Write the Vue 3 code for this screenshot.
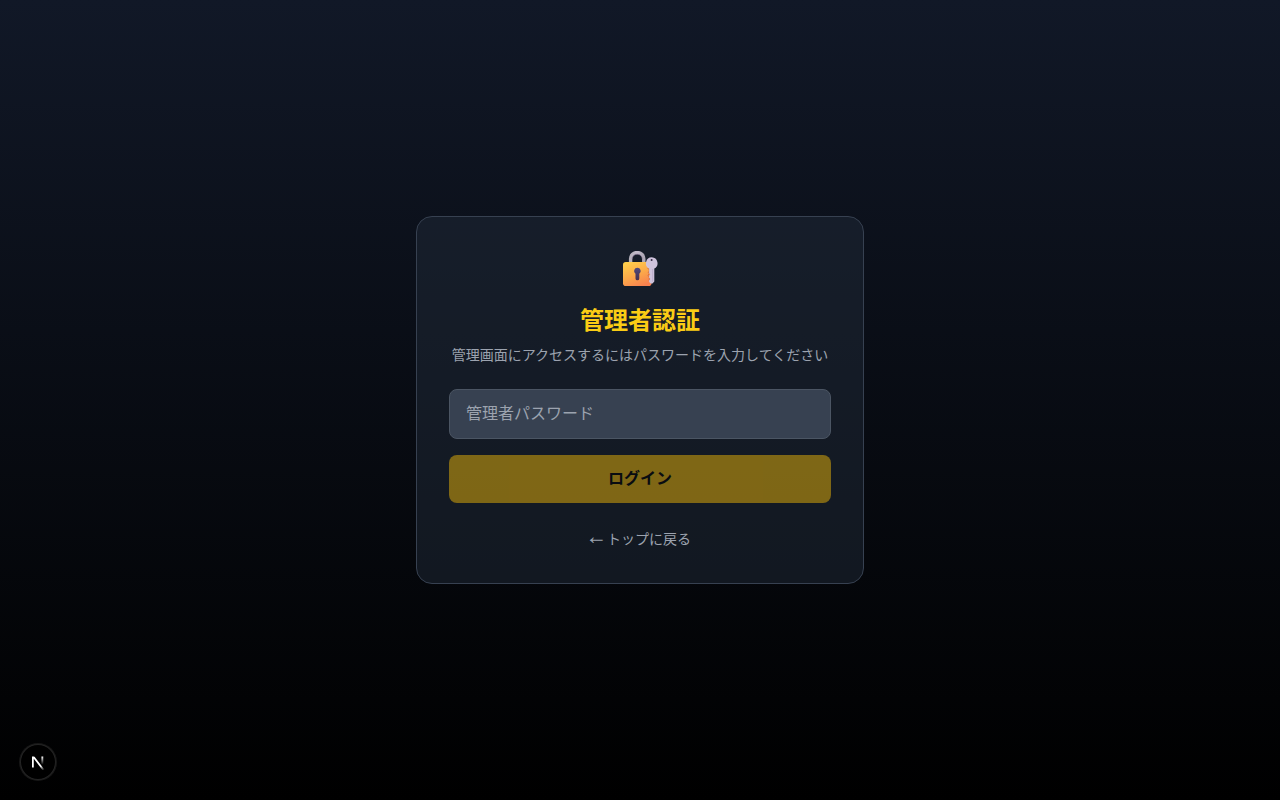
<template>
  <main class="login-page">
    <section class="login-card">
      <header class="login-header">
        <svg class="lock-icon" viewBox="0 0 36 36" role="img" aria-label="lock">
          <defs>
            <linearGradient id="lockBody" x1="0.2" y1="0" x2="0.7" y2="1">
              <stop offset="0" stop-color="#ffce4b" />
              <stop offset="0.5" stop-color="#fcab49" />
              <stop offset="1" stop-color="#f8804f" />
            </linearGradient>
            <linearGradient id="lockShackle" x1="0" y1="0" x2="1" y2="0">
              <stop offset="0" stop-color="#b4b0ba" />
              <stop offset="0.5" stop-color="#c2bcca" />
              <stop offset="1" stop-color="#aca6b4" />
            </linearGradient>
            <linearGradient id="lockHole" x1="0" y1="0" x2="0" y2="1">
              <stop offset="0" stop-color="#50497c" />
              <stop offset="1" stop-color="#47304f" />
            </linearGradient>
          </defs>
          <path
            d="M8.6 12V7.8a6.6 6.3 0 0 1 13.2 0V12"
            fill="none"
            stroke="url(#lockShackle)"
            stroke-width="3.4"
          />
          <path
            d="M10 8.2a5.2 5 0 0 1 10.4 0"
            fill="none"
            stroke="#8d789b"
            stroke-width="0.6"
          />
          <rect x="1" y="11" width="28.5" height="24" rx="2.8" fill="url(#lockBody)" />
          <path
            d="M15.4 16.8a3.3 3.3 0 0 1 1.9 6v4.6a1.9 1.9 0 0 1-3.8 0v-4.6a3.3 3.3 0 0 1 1.9-6Z"
            fill="url(#lockHole)"
          />
          <path
            d="M25.4 17.2l1.9 1.1v2l-1.2 1 1.2 1.4-1.3 1.5 1.3 2v3.8l1.6 1.6"
            fill="none"
            stroke="#c96a4e"
            stroke-width="0.9"
          />
          <path
            d="M29.8 6.3a6 6 0 0 1 2.5 11.3v13l-1.8 1.9h-1.9l-1.5-1.5v-1.7l1.3-1.3-1.3-1.3v-2l1.2-1.1-1.2-1.3v-4.7A6 6 0 0 1 29.8 6.3Z"
            fill="#cfc3dc"
          />
          <circle cx="29.6" cy="9" r="1" fill="#342c42" />
          <path d="M30.7 18v12.6" stroke="#b4a5c4" stroke-width="0.8" />
        </svg>
        <h1>管理者認証</h1>
        <p>管理画面にアクセスするにはパスワードを入力してください</p>
      </header>

      <form class="login-form" @submit.prevent="login">
        <input
          v-model="password"
          type="password"
          placeholder="管理者パスワード"
          aria-label="管理者パスワード"
        />
        <button type="submit" :disabled="!password">ログイン</button>
      </form>

      <div class="back">
        <a href="/"><span class="arrow">←</span> トップに戻る</a>
      </div>
    </section>

    <button class="dev-button" type="button" aria-label="Open Next.js Dev Tools">
      <svg viewBox="-0.5 -1 16 16" fill="none">
        <defs>
          <linearGradient
            id="nDiagonal"
            x1="9.95555"
            y1="11.1226"
            x2="15.4778"
            y2="17.9671"
            gradientUnits="userSpaceOnUse"
          >
            <stop stop-color="white" />
            <stop offset="0.604072" stop-color="white" stop-opacity="0" />
          </linearGradient>
          <linearGradient
            id="nStem"
            x1="11.8222"
            y1="1.40039"
            x2="11.791"
            y2="9.62542"
            gradientUnits="userSpaceOnUse"
          >
            <stop stop-color="white" />
            <stop offset="1" stop-color="white" stop-opacity="0" />
          </linearGradient>
          <mask id="nMask">
            <rect width="100%" height="100%" fill="white" />
            <rect width="5" height="1.5" fill="black" />
          </mask>
        </defs>
        <path
          d="M13.3 15.2 L2.34 1 V12.6"
          stroke="url(#nDiagonal)"
          stroke-width="1.86"
          mask="url(#nMask)"
        />
        <path d="M11.825 1.5 V13.1" stroke="url(#nStem)" stroke-width="1.86" />
      </svg>
    </button>
  </main>
</template>

<script setup>
import { ref } from 'vue';

const password = ref('');

const login = () => {
  password.value = '';
};
</script>

<style>
body {
  margin: 0;
  background: #000;
}
</style>

<style scoped>
.login-page {
  box-sizing: border-box;
  display: flex;
  align-items: center;
  justify-content: center;
  min-height: 100vh;
  padding: 16px;
  background: linear-gradient(to bottom, #111827, #000);
  font-family: "Liberation Sans", "Noto Sans CJK JP", sans-serif;
  font-size: 16px;
  line-height: 24px;
}

.login-card {
  box-sizing: border-box;
  width: 100%;
  max-width: 448px;
  padding: 32px;
  border: 1px solid #374151;
  border-radius: 16px;
  background: rgba(31, 41, 55, 0.5);
}

.login-header {
  display: flex;
  flex-direction: column;
  align-items: center;
  margin-bottom: 24px;
  text-align: center;
}

.lock-icon {
  width: 36px;
  height: 36px;
  margin: 2px 0 18px;
}

h1 {
  margin: 0;
  color: #facc15;
  font-size: 24px;
  font-weight: 700;
  line-height: 32px;
}

p {
  margin: 8px 0 0;
  color: #9ca3af;
  font-size: 14px;
  line-height: 20px;
}

.login-form {
  display: flex;
  flex-direction: column;
  gap: 16px;
}

.login-form input,
.login-form button {
  box-sizing: border-box;
  width: 100%;
  border-radius: 8px;
  font: inherit;
}

.login-form input {
  height: 50px;
  padding: 12px 16px;
  border: 1px solid #4b5563;
  background: #374151;
  color: #fff;
}

.login-form input::placeholder {
  color: #9ca3af;
  opacity: 1;
}

.login-form button {
  padding: 12px;
  border: 0;
  background: #eab308;
  color: #000;
  font-weight: 700;
  cursor: pointer;
}

.login-form button:disabled {
  opacity: 0.5;
  cursor: default;
}

.back {
  display: flex;
  justify-content: center;
  margin-top: 24px;
  padding: 2px 0;
}

.back a {
  color: #9ca3af;
  font-size: 14px;
  line-height: 20px;
  text-decoration: none;
}

.back a:hover {
  color: #fff;
}

.arrow {
  font-family: "Noto Sans Math", "Noto Sans CJK JP", sans-serif;
  line-height: 1;
}

.dev-button {
  position: fixed;
  bottom: 20px;
  left: 20px;
  display: flex;
  align-items: center;
  justify-content: center;
  width: 36px;
  height: 36px;
  padding: 0;
  border: 0;
  border-radius: 50%;
  background: #000;
  box-shadow: 0 0 0 1px #171717, inset 0 0 0 1px rgba(255, 255, 255, 0.14);
}

.dev-button svg {
  width: 16px;
  height: 16px;
}
</style>
